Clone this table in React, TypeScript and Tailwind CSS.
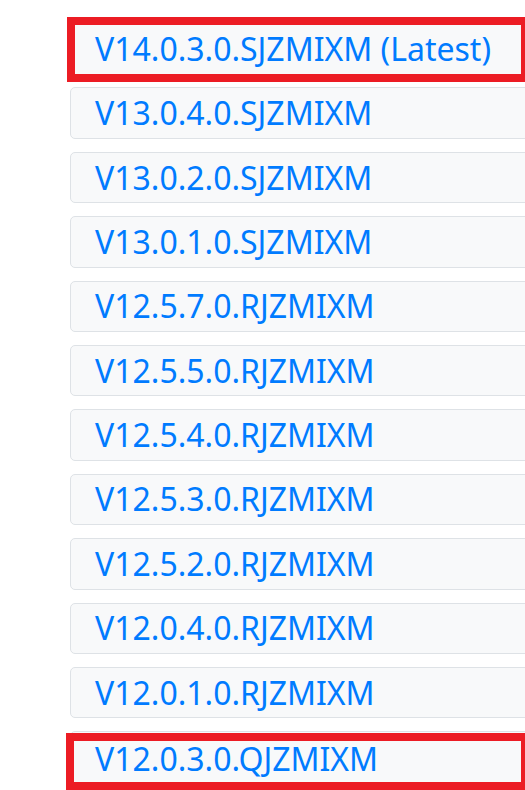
import React from 'react';

const versions = [
  { name: 'V14.0.3.0.SJZMIXM (Latest)', marked: true },
  { name: 'V13.0.4.0.SJZMIXM' },
  { name: 'V13.0.2.0.SJZMIXM' },
  { name: 'V13.0.1.0.SJZMIXM' },
  { name: 'V12.5.7.0.RJZMIXM' },
  { name: 'V12.5.5.0.RJZMIXM' },
  { name: 'V12.5.4.0.RJZMIXM' },
  { name: 'V12.5.3.0.RJZMIXM' },
  { name: 'V12.5.2.0.RJZMIXM' },
  { name: 'V12.0.4.0.RJZMIXM' },
  { name: 'V12.0.1.0.RJZMIXM' },
  { name: 'V12.0.3.0.QJZMIXM', marked: true, last: true },
];

const App: React.FC = () => {
  return (
    <div
      className="w-[525px] h-[790px] overflow-hidden bg-white"
      style={{ fontFamily: '"Noto Sans", "Open Sans", sans-serif' }}
    >
      <div className="pl-[70px] pt-[23px] flex flex-col gap-[12.9px] w-[1000px]">
        {versions.map((v, i) => (
          <div key={i} className="relative w-[480px]">
            <a
              href="#"
              className={`flex items-center pl-[24px] bg-[#f8f9fa] border border-[#dee2e6] rounded-[5px] text-[#007bff] text-[32px] leading-none whitespace-nowrap ${
                v.last ? 'h-[55px]' : 'h-[51.5px]'
              }`}
            >
              {v.name}
            </a>
            {v.marked && (
              <div
                className={`absolute border-[8px] border-[#ec1c24] ${
                  v.last
                    ? 'left-[-4px] top-[2px] w-[463px] h-[57px]'
                    : 'left-[-3px] top-[-6px] w-[462px] h-[65px]'
                }`}
              />
            )}
          </div>
        ))}
      </div>
    </div>
  );
};

export default App;
